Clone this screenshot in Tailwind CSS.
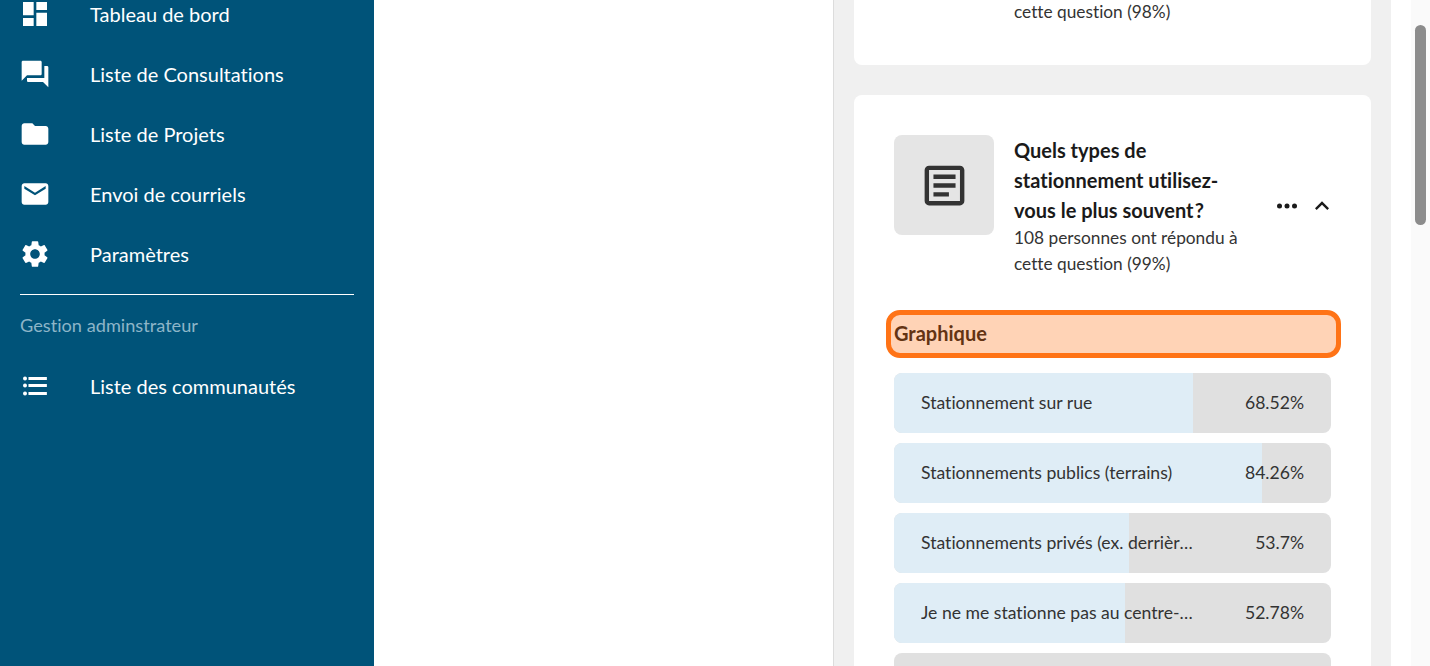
<!DOCTYPE html>
<html lang="fr">

<head>
    <meta charset="UTF-8">
    <meta name="viewport" content="width=device-width, initial-scale=1.0">
    <title>Résultats</title>
    <script src="https://cdn.jsdelivr.net/npm/@tailwindcss/browser@4"></script>
</head>

<body class="h-screen overflow-hidden bg-white font-['Lato',sans-serif] [font-variant-ligatures:no-common-ligatures]">
    <div class="flex h-[666px]">
        <!-- Sidebar -->
        <aside class="w-[374px] shrink-0 bg-[#005379] text-white px-5 -mt-[16px] h-[682px]">
            <a class="flex items-center h-[60px] text-[20px]">
                <svg class="w-8 h-8 -ml-px fill-white shrink-0" viewBox="0 0 24 24"><path d="M3 13h8V3H3v10zm0 8h8v-6H3v6zm10 0h8V11h-8v10zm0-18v6h8V3h-8z"/></svg>
                <span class="ml-[39px]">Tableau de bord</span>
            </a>
            <a class="flex items-center h-[60px] text-[20px]">
                <svg class="w-8 h-8 -ml-px fill-white shrink-0" viewBox="0 0 24 24"><path d="M21 6h-2v9H6v2c0 .55.45 1 1 1h11l4 4V7c0-.55-.45-1-1-1zm-4 6V3c0-.55-.45-1-1-1H3c-.55 0-1 .45-1 1v14l4-4h10c.55 0 1-.45 1-1z"/></svg>
                <span class="ml-[39px]">Liste de Consultations</span>
            </a>
            <a class="flex items-center h-[60px] text-[20px]">
                <svg class="w-8 h-8 -ml-px fill-white shrink-0" viewBox="0 0 24 24"><path d="M10 4H4c-1.1 0-1.99.9-1.99 2L2 18c0 1.1.9 2 2 2h16c1.1 0 2-.9 2-2V8c0-1.1-.9-2-2-2h-8l-2-2z"/></svg>
                <span class="ml-[39px]">Liste de Projets</span>
            </a>
            <a class="flex items-center h-[60px] text-[20px]">
                <svg class="w-8 h-8 -ml-px fill-white shrink-0" viewBox="0 0 24 24"><path d="M20 4H4c-1.1 0-1.99.9-1.99 2L2 18c0 1.1.9 2 2 2h16c1.1 0 2-.9 2-2V6c0-1.1-.9-2-2-2zm0 4l-8 5-8-5V6l8 5 8-5v2z"/></svg>
                <span class="ml-[39px]">Envoi de courriels</span>
            </a>
            <a class="flex items-center h-[60px] text-[20px]">
                <svg class="w-8 h-8 -ml-px fill-white shrink-0" viewBox="0 0 24 24"><path d="M19.14 12.94c.04-.3.06-.61.06-.94 0-.32-.02-.64-.07-.94l2.03-1.58c.18-.14.23-.41.12-.61l-1.92-3.32c-.12-.22-.37-.29-.59-.22l-2.39.96c-.5-.38-1.03-.7-1.62-.94l-.36-2.54c-.04-.24-.24-.41-.48-.41h-3.84c-.24 0-.43.17-.47.41l-.36 2.54c-.59.24-1.13.57-1.62.94l-2.39-.96c-.22-.08-.47 0-.59.22L2.74 8.87c-.12.21-.08.47.12.61l2.03 1.58c-.05.3-.09.63-.09.94s.02.64.07.94l-2.03 1.58c-.18.14-.23.41-.12.61l1.92 3.32c.12.22.37.29.59.22l2.39-.96c.5.38 1.03.7 1.62.94l.36 2.54c.05.24.24.41.48.41h3.84c.24 0 .44-.17.47-.41l.36-2.54c.59-.24 1.13-.56 1.62-.94l2.39.96c.22.08.47 0 .59-.22l1.92-3.32c.12-.22.07-.47-.12-.61l-2.01-1.58zM12 15.6c-1.98 0-3.6-1.62-3.6-3.6s1.62-3.6 3.6-3.6 3.6 1.62 3.6 3.6-1.62 3.6-3.6 3.6z"/></svg>
                <span class="ml-[39px]">Paramètres</span>
            </a>
            <div class="mt-[10px] border-t border-white"></div>
            <p class="mt-[19px] text-[18.2px] leading-[22px] text-[#8db5c8]">Gestion adminstrateur</p>
            <a class="flex items-center h-[60px] mt-[20px] text-[20px]">
                <svg class="w-8 h-8 -ml-px fill-white shrink-0" viewBox="0 0 24 24">
                    <circle cx="4.5" cy="6.4" r="1.5"/><circle cx="4.5" cy="11.6" r="1.5"/><circle cx="4.5" cy="17.6" r="1.5"/>
                    <path d="M7.1 5.25h13.8v2.25H7.1zM7.1 10.5h13.8v2.25H7.1zM7.1 16.5h13.8v2.25H7.1z"/>
                </svg>
                <span class="ml-[39px]">Liste des communautés</span>
            </a>
        </aside>

        <!-- Middle blank -->
        <main class="flex-1 min-w-0"></main>

        <!-- Results panel -->
        <section class="w-[558px] shrink-0 border-l border-[#dcdcdc] bg-[#f0f0f0] px-5 text-[#222]">
            <!-- Previous card, scrolled off -->
            <div class="h-[65px] rounded-b-lg bg-white pl-[160px] flex flex-col justify-end pb-[40px] overflow-visible">
                <p class="text-[17.3px] leading-[26px] text-[#333]">cette question (98%)</p>
            </div>

            <div class="mt-[30px] rounded-t-lg bg-white px-10 pt-10 h-[600px]">
                <div class="flex items-center">
                    <div class="self-start w-[100px] h-[100px] rounded-lg bg-[#e5e5e5] flex items-center justify-center shrink-0">
                        <svg class="w-[53px] h-[53px] fill-[#333]" viewBox="0 0 24 24">
                            <path d="M19 5v14H5V5h14m0-2H5c-1.1 0-2 .9-2 2v14c0 1.1.9 2 2 2h14c1.1 0 2-.9 2-2V5c0-1.1-.9-2-2-2z"/>
                            <path d="M14 17H7v-2h7v2zm3-4H7v-2h10v2zm0-4H7V7h10v2z"/>
                        </svg>
                    </div>
                    <div class="ml-5 w-[240px] shrink-0">
                        <h3 class="text-[20px] leading-[30px] font-bold text-[#1a1a1a]">Quels types de stationnement utilisez-vous le plus souvent&#8202;?</h3>
                        <p class="text-[17.3px] leading-[26px] text-[#333]">108 personnes ont répondu à cette question (99%)</p>
                    </div>
                    <div class="ml-auto -mr-[5px] flex items-center gap-[6px]">
                        <svg class="w-[30px] h-[30px] fill-[#1a1a1a]" viewBox="0 0 24 24"><circle cx="6" cy="12" r="2"/><circle cx="12" cy="12" r="2"/><circle cx="18" cy="12" r="2"/></svg>
                        <svg class="w-7 h-7 fill-[#1a1a1a]" viewBox="0 0 24 24"><path d="M12 8l-6 6 1.41 1.41L12 10.83l4.59 4.58L18 14z"/></svg>
                    </div>
                </div>

                <div class="mt-[33px] -ml-2 w-[455px] h-12 rounded-[14px] border-[5px] border-[#ff7316] bg-[#ffd3b6] pl-[3px] pb-[2px] flex items-center text-[20px] font-bold text-[#633313]">Graphique</div>

                <div class="mt-[15px] flex flex-col gap-[10px] text-[17.6px] text-[#333]">
                    <div class="relative h-[60px] rounded-lg bg-[#e0e0e0] overflow-hidden">
                        <div class="absolute inset-y-0 left-0 bg-[#dfedf6]" style="width: 68.52%"></div>
                        <div class="relative h-full flex items-center justify-between px-[27px]">
                            <span class="w-[275px] truncate">Stationnement sur rue</span><span>68.52%</span>
                        </div>
                    </div>
                    <div class="relative h-[60px] rounded-lg bg-[#e0e0e0] overflow-hidden">
                        <div class="absolute inset-y-0 left-0 bg-[#dfedf6]" style="width: 84.26%"></div>
                        <div class="relative h-full flex items-center justify-between px-[27px]">
                            <span class="w-[275px] truncate">Stationnements publics (terrains)</span><span>84.26%</span>
                        </div>
                    </div>
                    <div class="relative h-[60px] rounded-lg bg-[#e0e0e0] overflow-hidden">
                        <div class="absolute inset-y-0 left-0 bg-[#dfedf6]" style="width: 53.7%"></div>
                        <div class="relative h-full flex items-center justify-between px-[27px]">
                            <span class="w-[275px] truncate">Stationnements privés (ex. derrière un commerce)</span><span>53.7%</span>
                        </div>
                    </div>
                    <div class="relative h-[60px] rounded-lg bg-[#e0e0e0] overflow-hidden">
                        <div class="absolute inset-y-0 left-0 bg-[#dfedf6]" style="width: 52.78%"></div>
                        <div class="relative h-full flex items-center justify-between px-[27px]">
                            <span class="w-[275px] truncate">Je ne me stationne pas au centre-ville</span><span>52.78%</span>
                        </div>
                    </div>
                    <div class="h-[60px] rounded-lg bg-[#e0e0e0]"></div>
                </div>
            </div>
        </section>

        <!-- Page scrollbar -->
        <div class="w-5 shrink-0 bg-white"></div>
        <div class="w-[19px] shrink-0 bg-[#fafafa] pl-1 pt-[25px]">
            <div class="w-[11px] h-[200px] rounded-full bg-[#8c8c8c]"></div>
        </div>
    </div>
</body>

</html>
